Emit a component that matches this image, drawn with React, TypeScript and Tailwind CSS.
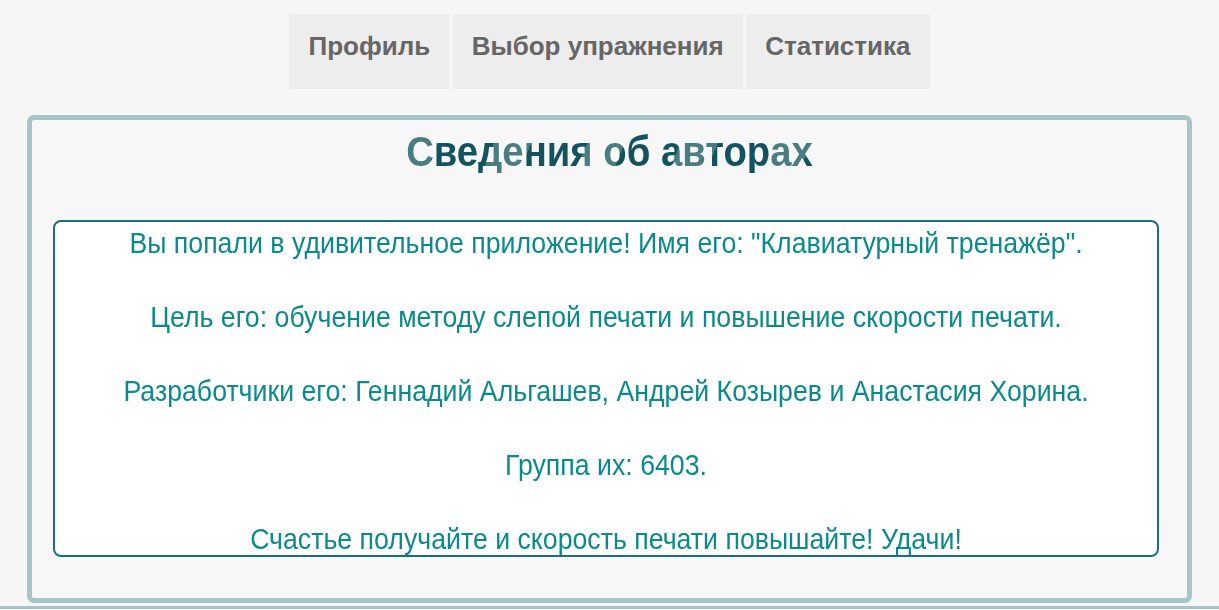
import React from "react"

const tabs = ["Профиль", "Выбор упражнения", "Статистика"]

const lines = [
  "Вы попали в удивительное приложение! Имя его: \"Клавиатурный тренажёр\".",
  "Цель его: обучение методу слепой печати и повышение скорости печати.",
  "Разработчики его: Геннадий Альгашев, Андрей Козырев и Анастасия Хорина.",
  "Группа их: 6403.",
  "Счастье получайте и скорость печати повышайте! Удачи!",
]

export default function App() {
  return (
    <div className="min-h-[610px] bg-[#f6f6f6] font-['Liberation_Sans',Arial,sans-serif] overflow-hidden">
      <nav className="flex justify-center gap-[3.5px] pt-[14px]">
        {tabs.map((t) => (
          <div
            key={t}
            className="h-[75px] px-[19px] pt-[17px] bg-[#ededed] text-[#666666] text-[26px] leading-[30px] font-bold"
          >
            {t}
          </div>
        ))}
      </nav>
      <section className="mx-[27px] mt-[26px] h-[488px] border-[5px] border-[#a7c5c9] rounded-[7px] bg-[#f7f7f7] flex flex-col">
        <h1 className="text-center text-[43px] font-bold leading-none mt-[10px]">
          <span className="inline-block scale-x-[0.89] bg-[repeating-linear-gradient(115deg,#4a7d7f_0px,#4a7d7f_38px,#13535f_38px,#13535f_95px)] bg-clip-text text-transparent">
            Сведения об авторах
          </span>
        </h1>
        <div className="ml-[21px] mr-[28px] mt-[47px] h-[337px] border-2 border-[#1d6f75] rounded-[8px] bg-white text-[#0a8a8a] text-[30px] text-center leading-[34px]">
          {lines.map((l, i) => (
            <p key={i} className={i === 0 ? "mt-[4px] scale-x-[0.89]" : "mt-[40px] scale-x-[0.89]"}>
              {l}
            </p>
          ))}
        </div>
      </section>
      <div className="mt-[3px] h-[3px] bg-[#a7c5c9]" />
    </div>
  )
}
